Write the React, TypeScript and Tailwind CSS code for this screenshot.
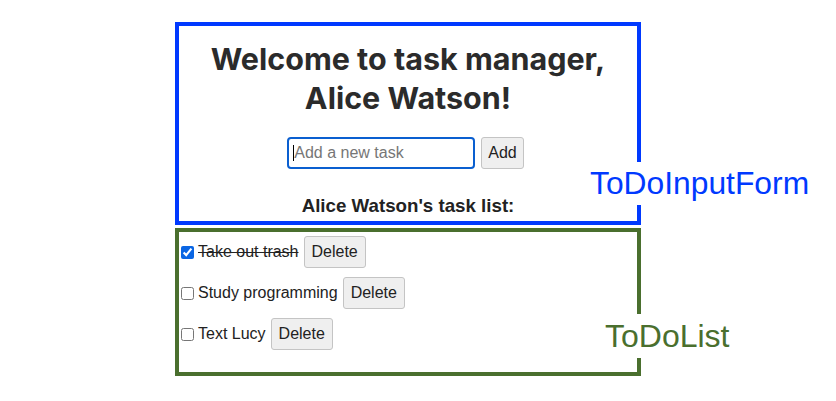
import { useState } from 'react'

interface Task {
  id: number
  text: string
  done: boolean
}

const initialTasks: Task[] = [
  { id: 1, text: 'Take out trash', done: true },
  { id: 2, text: 'Study programming', done: false },
  { id: 3, text: 'Text Lucy', done: false },
]

function ToDoInputForm({ name }: { name: string }) {
  return (
    <div className="relative w-[466px] border-4 border-[#0039ff] pt-[13px] pb-[4px]">
      <h1 className="text-center text-[30.5px] leading-[39px] font-bold text-[#2b2b2b] font-['Inter',sans-serif] px-4">
        Welcome to task manager,
        <br />
        {name}!
      </h1>
      <form className="mt-[20px] flex justify-center gap-[6px] pr-[5px]" onSubmit={(e) => e.preventDefault()}>
        <div className="relative">
          <input
            type="text"
            placeholder="Add a new task"
            className="h-[32px] w-[188px] rounded-[4px] border-2 border-[#0a5fd0] px-[5px] text-[16px] text-[#222] caret-transparent outline-none placeholder:text-[#767676]"
          />
          <span className="absolute left-[6px] top-[8px] h-[16px] w-px bg-black" />
        </div>
        <button
          type="submit"
          className="h-[32px] rounded-[3px] border border-[#c4c4c4] bg-[#efefef] px-[6px] text-[16px] text-[#222]"
        >
          Add
        </button>
      </form>
      <h3 className="mt-[26px] text-center text-[18.72px] leading-[22px] font-bold text-[#222]">
        {name}'s task list:
      </h3>
      <span className="absolute left-[411px] top-[136px] bg-white text-[31.8px] leading-[43px] text-[#0039ff] whitespace-nowrap">
        ToDoInputForm
      </span>
    </div>
  )
}

function ToDoList() {
  const [tasks, setTasks] = useState(initialTasks)

  const toggle = (id: number) =>
    setTasks((ts) => ts.map((t) => (t.id === id ? { ...t, done: !t.done } : t)))

  const remove = (id: number) => setTasks((ts) => ts.filter((t) => t.id !== id))

  return (
    <div className="relative mt-[3px] h-[148px] w-[466px] border-4 border-[#4a6f2e] pt-[4px]">
      {tasks.map((t) => (
        <div key={t.id} className="mb-[9px] flex h-[32px] items-center text-[16px] text-[#222]">
          <input
            type="checkbox"
            checked={t.done}
            onChange={() => toggle(t.id)}
            className="ml-[2px] mr-[4px] h-[13px] w-[13px] accent-[#0a66e4]"
          />
          <span className={t.done ? 'line-through' : ''}>{t.text}</span>
          <button
            onClick={() => remove(t.id)}
            className="ml-[5px] h-[32px] rounded-[3px] border border-[#c4c4c4] bg-[#efefef] px-[7px] text-[16px] text-[#222]"
          >
            Delete
          </button>
        </div>
      ))}
      <span className="absolute left-[426px] top-[82px] bg-white text-[32px] leading-[44px] text-[#4a6f2e] whitespace-nowrap">
        ToDoList
      </span>
    </div>
  )
}

export default function App() {
  return (
    <div className="min-h-[401px] bg-white pt-[22px] pl-[175px] font-['Liberation_Sans',Arial,sans-serif]">
      <ToDoInputForm name="Alice Watson" />
      <ToDoList />
    </div>
  )
}
